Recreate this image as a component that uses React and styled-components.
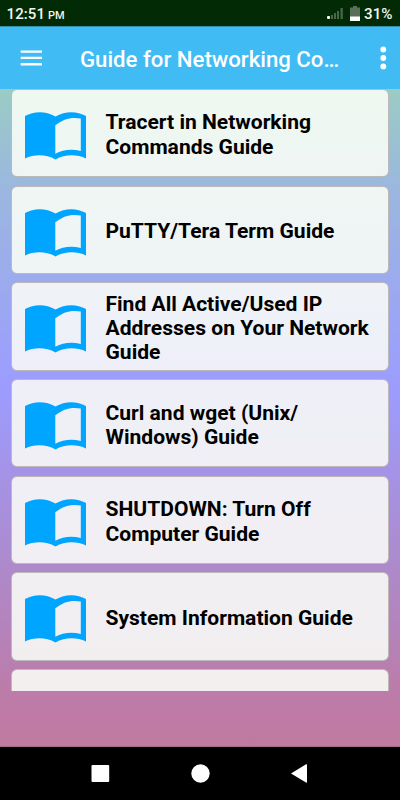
import React from 'react';
import styled, { createGlobalStyle } from 'styled-components';

const GlobalStyle = createGlobalStyle`
  * { box-sizing: border-box; }
  body { margin: 0; overflow: hidden; font-family: Roboto, sans-serif; }
  svg { display: block; flex: none; }
`;

const Screen = styled.div`
  width: 400px;
  height: 800px;
  display: flex;
  flex-direction: column;
  overflow: hidden;
`;

const StatusBar = styled.header`
  height: 26px;
  flex: none;
  display: flex;
  align-items: center;
  padding: 1px 6px 0 6.5px;
  background: #022a04;
  color: #f1f5f1;
  font-size: 15px;
  font-weight: 500;
`;

const Clock = styled.span`
  flex: 1;
  letter-spacing: 0.1px;
`;

const Meridiem = styled.span`
  margin-left: -1px;
  font-size: 11px;
`;

const Battery = styled.span`
  width: 30px;
  white-space: nowrap;
  font-size: 15.2px;
`;

const AppBar = styled.div`
  height: 63px;
  flex: none;
  display: flex;
  align-items: center;
  padding: 0 13px 0 20px;
  background: #40bbf3;
  border-top: 1px solid #328fa9;
  color: #fff;
`;

const Title = styled.h1`
  width: 264px;
  margin: 1px 36px 0 38px;
  font-size: 22.2px;
  font-weight: 500;
  line-height: 28px;
  white-space: nowrap;
`;

const IconButton = styled.button`
  display: flex;
  padding: 0;
  border: 0;
  background: none;
  color: inherit;
`;

const Content = styled.main`
  height: 658px;
  flex: none;
  background: linear-gradient(#9accc4 0, #9bb7df 100px, #9c9cff 300px, #ae89c9 485px, #bd7ba8 608px, #c07aa0 658px);
  border-bottom: 1px solid #a9698a;
`;

const List = styled.div`
  height: 602px;
  margin: 0 11px;
  overflow: hidden;
  display: flex;
  flex-direction: column;
  gap: 8.3px;
`;

const Card = styled.article`
  height: 88.4px;
  flex: none;
  display: flex;
  align-items: center;
  padding: 5.4px 12px 0 13px;
  border: 1px solid #bdb9b8;
  border-radius: 6px;
  background: linear-gradient(${({ $tint }) => $tint});
`;

const CardTitle = styled.h2`
  margin: -2px 0 0 19.5px;
  color: #000;
  font-size: 21.05px;
  font-weight: 700;
  line-height: 24.4px;
  white-space: pre;
`;

const NavBar = styled.nav`
  height: 53px;
  flex: none;
  display: flex;
  justify-content: center;
  align-items: center;
  gap: 81px;
  background: #000;
`;

const guides = [
  { title: 'Tracert in Networking\nCommands Guide', tint: '#eef8f0, #eff5f4' },
  { title: 'PuTTY/Tera Term Guide', tint: '#eff6f3, #eff4f5' },
  { title: 'Find All Active/Used IP\nAddresses on Your Network\nGuide', tint: '#eff3f6, #eeeff9' },
  { title: 'Curl and wget (Unix/\nWindows) Guide', tint: '#efeff8, #f0eff5' },
  { title: 'SHUTDOWN: Turn Off\nComputer Guide', tint: '#f0eff5, #f1eff3' },
  { title: 'System Information Guide', tint: '#f1eff3, #f2eef0' },
  { title: '', tint: '#f3efef, #f3eeee' },
];

const BookIcon = () => (
  <svg width="61" height="48" viewBox="0 0 61 48" fill="#00a5ff">
    <path
      fillRule="evenodd"
      d="M0 4C9-1.2 21-1.2 30.5 4.4C40-1.2 52-1.2 61 4V46.5C52 42 40 42 30.5 47.4C21 42 9 42 0 46.5ZM30.3 13.3V41.7C38 37.5 47 36.8 55.8 39V6.6C47 4.6 38 6.8 30.3 13.3Z"
    />
  </svg>
);

const SignalIcon = () => (
  <svg width="17" height="13" viewBox="0 0 17 13" fill="#49664b">
    <rect x="0" y="9" width="3" height="3" rx="1" fill="#fff" />
    <rect x="4" y="8" width="2" height="4" />
    <rect x="7" y="6" width="2" height="6" />
    <rect x="10" y="4" width="2" height="8" />
    <rect x="13.5" y="1" width="2.3" height="11" />
  </svg>
);

const BatteryIcon = styled(({ className }) => (
  <svg className={className} width="10" height="15" viewBox="0 0 10 15">
    <path d="M0 1.5H3V0H7V1.5H10V11H0Z" fill="#5a6e59" />
    <path d="M0 10.5H10V15H0Z" fill="#fff" />
  </svg>
))`
  margin: 0 4px 0 6px;
`;

export default function App() {
  return (
    <>
      <GlobalStyle />
      <Screen>
        <StatusBar>
          <Clock>12:51 <Meridiem>PM</Meridiem></Clock>
          <SignalIcon />
          <BatteryIcon />
          <Battery>31%</Battery>
        </StatusBar>
        <AppBar>
          <IconButton aria-label="Menu">
            <svg width="22" height="16" viewBox="0 0 22 16" fill="currentColor">
              <path d="M.7.4H22V2.7H.7ZM.7 6.7H22V9.1H.7ZM.7 13H22V15.4H.7Z" />
            </svg>
          </IconButton>
          <Title>Guide for Networking Co…</Title>
          <IconButton aria-label="More options">
            <svg width="7" height="24" viewBox="0 0 7 24" fill="currentColor">
              <circle cx="3.3" cy="3.5" r="2.9" />
              <circle cx="3.3" cy="12" r="2.9" />
              <circle cx="3.3" cy="20.4" r="2.9" />
            </svg>
          </IconButton>
        </AppBar>
        <Content>
          <List>
            {guides.map(({ title, tint }) => (
              <Card key={title} $tint={tint}>
                {title && (
                  <>
                    <BookIcon />
                    <CardTitle>{title}</CardTitle>
                  </>
                )}
              </Card>
            ))}
          </List>
        </Content>
        <NavBar>
          <svg width="19" height="19" viewBox="0 0 19 19" fill="#fff">
            <rect x=".5" y="1" width="17.7" height="17" rx="1" />
          </svg>
          <svg width="19" height="19" viewBox="0 0 19 19" fill="#fff">
            <circle cx="9.5" cy="9.5" r="9.2" />
          </svg>
          <svg width="19" height="19" viewBox="0 0 19 19" fill="#fff">
            <path d="M0 9.5L15 .3Q16 0 16 1V18Q16 19 15 18.6Z" />
          </svg>
        </NavBar>
      </Screen>
    </>
  );
}
